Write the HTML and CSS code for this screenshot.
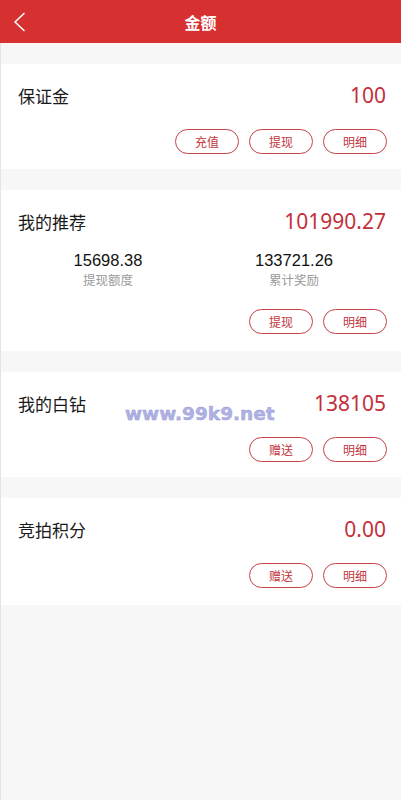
FILE: index.html
```html
<!DOCTYPE html>
<html lang="zh-CN">
<head>
<meta charset="utf-8">
<title>金额</title>
<link rel="stylesheet" href="styles.css">
</head>
<body>
<div class="page">
  <header class="topbar">
    <span class="back">
      <svg width="14" height="20" viewBox="0 0 14 20"><polyline points="11,1.5 2,10 11,18.5" fill="none" stroke="#fff" stroke-width="1.6" stroke-linecap="round" stroke-linejoin="round"/></svg>
    </span>
    <h1 class="title">金额</h1>
  </header>

  <main class="list">
    <section class="card">
      <div class="head"><span class="name">保证金</span><span class="value">100</span></div>
      <div class="actions"><span class="btn">充值</span><span class="btn">提现</span><span class="btn">明细</span></div>
    </section>

    <section class="card card-tall">
      <div class="head"><span class="name">我的推荐</span><span class="value">101990.27</span></div>
      <div class="stats">
        <div class="stat"><span class="num">15698.38</span><span class="label">提现额度</span></div>
        <div class="stat"><span class="num">133721.26</span><span class="label">累计奖励</span></div>
      </div>
      <div class="actions actions-wide"><span class="btn">提现</span><span class="btn">明细</span></div>
    </section>

    <section class="card">
      <div class="head"><span class="name">我的白钻</span><span class="value">138105</span></div>
      <div class="actions"><span class="btn">赠送</span><span class="btn">明细</span></div>
    </section>

    <section class="card card-last">
      <div class="head"><span class="name">竞拍积分</span><span class="value">0.00</span></div>
      <div class="actions"><span class="btn">赠送</span><span class="btn">明细</span></div>
    </section>
  </main>

  <div class="watermark">www.99k9.net</div>
</div>
</body>
</html>
```

FILE: styles.css
```css
* { box-sizing: border-box; }
html, body {
  margin: 0;
  padding: 0;
  background: #f7f7f7;
}
body {
  font-family: "Noto Sans", "Noto Sans CJK SC", sans-serif;
  color: #111;
}
.page {
  position: relative;
  width: 401px;
  min-height: 800px;
  background: #f7f7f7;
  border-left: 1px solid #e4e4e4;
}
.topbar {
  height: 43px;
  background: #d73030;
  display: flex;
  align-items: center;
  justify-content: center;
  position: relative;
  margin-left: -1px;
}
.back {
  position: absolute;
  left: 13px;
  top: 12px;
  width: 14px;
  height: 20px;
  display: block;
}
.back svg { display: block; }
.title {
  margin: 0;
  font-family: "Noto Sans CJK SC", sans-serif;
  font-size: 16px;
  font-weight: 700;
  color: #fff;
  line-height: 20px;
}
.list {
  display: flex;
  flex-direction: column;
  gap: 21px;
  padding-top: 21px;
}
.card {
  background: #fff;
  padding: 20px 14px 15px 17px;
}
.card-tall { padding-bottom: 17px; }
.card-last { padding-bottom: 17px; }
.head {
  display: flex;
  justify-content: space-between;
  align-items: center;
  height: 24px;
}
.name {
  font-family: "Noto Sans CJK SC", sans-serif;
  font-size: 17px;
  font-weight: 400;
  line-height: 24px;
  color: #1a1a1a;
}
.value {
  font-family: "Noto Sans", sans-serif;
  font-size: 21px;
  line-height: 24px;
  color: #c3303a;
  margin-right: 1px;
  position: relative;
  top: -1px;
}
.stats {
  display: grid;
  grid-template-columns: 1fr 1fr;
  margin: 17px 0 0 -3px;
}
.stat {
  display: flex;
  flex-direction: column;
  align-items: center;
}
.num {
  font-family: "Liberation Sans", sans-serif;
  font-size: 16.5px;
  line-height: 19px;
  height: 19px;
  color: #111;
}
.label {
  font-family: "Noto Sans CJK SC", sans-serif;
  font-size: 12.5px;
  line-height: 19px;
  height: 19px;
  color: #9a9a9a;
}
.actions {
  display: flex;
  justify-content: flex-end;
  gap: 10px;
  margin-top: 21px;
}
.actions-wide { margin-top: 20px; }
.btn {
  width: 64px;
  height: 25px;
  border: 1px solid #c54248;
  border-radius: 13px;
  display: flex;
  align-items: center;
  justify-content: center;
  font-family: "Noto Sans CJK SC", sans-serif;
  font-size: 12px;
  color: #c3363c;
}
.watermark {
  position: absolute;
  left: 124px;
  top: 402px;
  font-family: "DejaVu Sans", sans-serif;
  font-weight: 700;
  font-size: 18.5px;
  line-height: 24px;
  color: #aeb1e3;
  -webkit-text-stroke: 0.4px #979bd4;
  pointer-events: none;
}
```
